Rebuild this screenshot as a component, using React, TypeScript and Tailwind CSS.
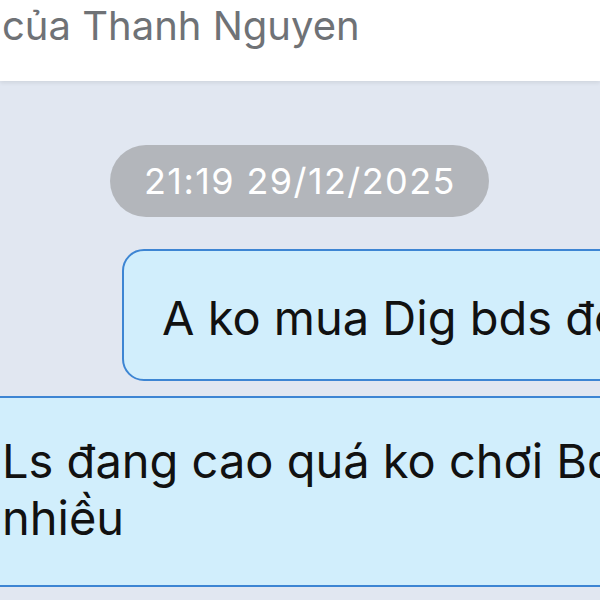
export default function App() {
  return (
    <div className="w-[600px] h-[600px] overflow-hidden bg-[#e1e7f1] flex flex-col font-['Inter','Roboto',sans-serif]">
      <header className="h-[81px] shrink-0 bg-white shadow-[0_2px_4px_rgba(0,0,0,0.08)] z-10 flex items-start">
        <div className="pl-[2px] pt-[2px] text-[40px] leading-[48px] text-[#6f7276] whitespace-nowrap">của Thanh Nguyen</div>
      </header>
      <main className="flex flex-col pt-[64px]">
        <div className="self-start ml-[110px] h-[72px] w-[379px] pl-[34px] rounded-full bg-[#b3b6bb] text-white text-[36px] tracking-[1.4px] flex items-center whitespace-nowrap">
          21:19 29/12/2025
        </div>
        <div className="mt-[32px] ml-[122px] mr-[-80px] h-[132px] rounded-[22px] border-2 border-[#3d85d3] bg-[#d1eefc] flex items-center pl-[38px] pt-[6px] text-[47px] text-[#111] whitespace-nowrap">
          A ko mua Dig bds đó
        </div>
        <div className="mt-[15px] mx-[-40px] h-[191px] rounded-[22px] border-2 border-[#3d85d3] bg-[#d1eefc] pl-[40px] pt-[34px] text-[47px] leading-[57px] text-[#111] whitespace-nowrap">
          Ls đang cao quá ko chơi Bđs
          <br />
          nhiều
        </div>
      </main>
    </div>
  );
}
